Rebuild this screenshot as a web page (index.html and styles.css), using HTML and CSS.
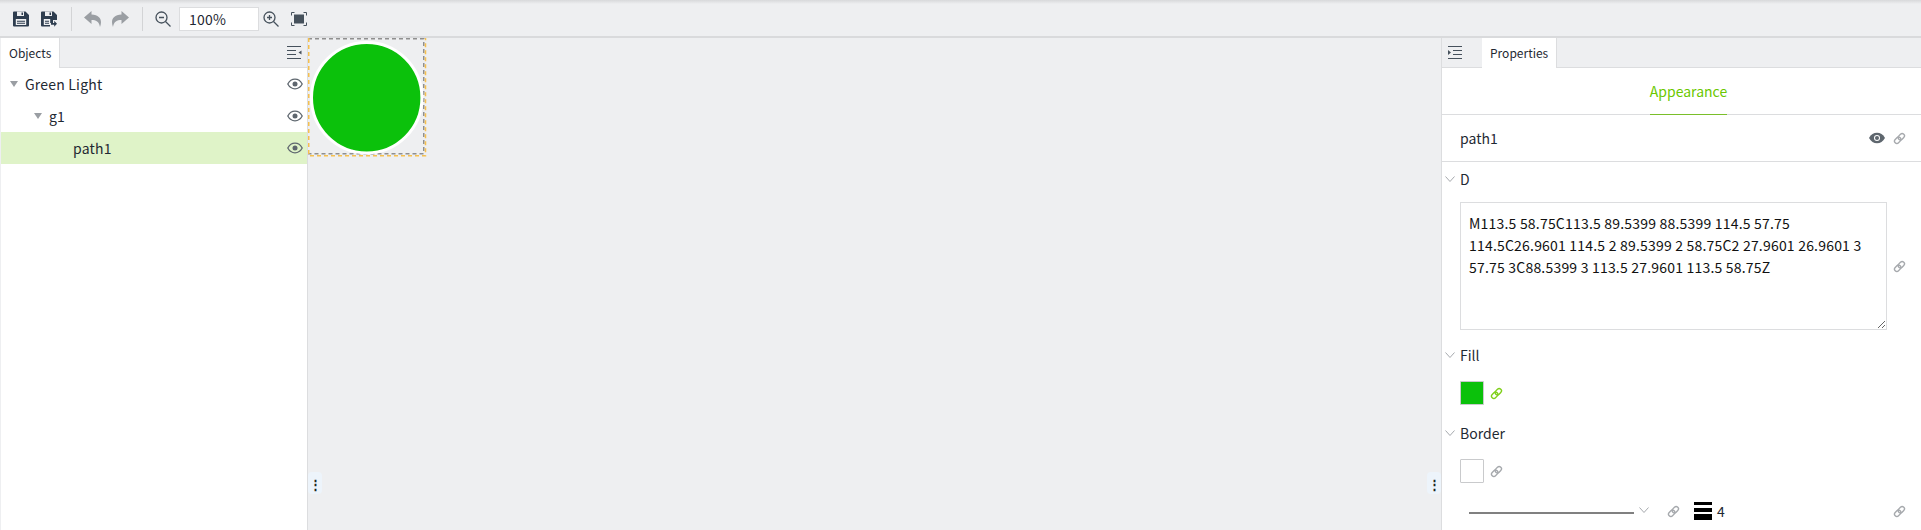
FILE: index.html
```html
<!DOCTYPE html>
<html lang="en">
<head>
  <meta charset="UTF-8">
  <title>Green Light</title>
  <link rel="stylesheet" href="styles.css">
</head>
<body>
  <svg class="defs" width="0" height="0">
    <symbol id="eye" viewBox="0 0 16 12">
      <path d="M.8 6C2.500 2.800 5 1.200 8 1.200S13.500 2.800 15.200 6C13.500 9.200 11 10.800 8 10.800S2.500 9.200.8 6Z" fill="none" stroke="currentColor" stroke-width="1.300"/>
      <circle cx="8" cy="6" r="2.500" fill="currentColor"/>
    </symbol>
    <symbol id="link" viewBox="0 0 14 14">
      <g fill="none" stroke="currentColor" stroke-width="1.500" transform="rotate(-45 7 7)">
        <rect x="0.500" y="4.500" width="7.500" height="5" rx="2.500"/>
        <rect x="6" y="4.500" width="7.500" height="5" rx="2.500"/>
      </g>
    </symbol>
    <symbol id="chev" viewBox="0 0 10 6">
      <path d="M.5.500 5 5.500 9.500.500" fill="none" stroke="currentColor" stroke-width="1"/>
    </symbol>
  </svg>

  <div class="toolbar">
    <button class="tool tool-save">
      <svg width="16" height="16" viewBox="0 0 16 16"><path d="M0 1.500A1 1 0 0 1 1 .5h11.500L16 4v10.500a1 1 0 0 1-1 1H1a1 1 0 0 1-1-1Z" fill="#2e3d4f"/><path d="M4 .5h7v4.500H4Z" fill="#eeeff1"/><path d="M8.500 1.500h1.500v2.500H8.500Z" fill="#2e3d4f"/><path d="M2.800 8h10.400v6H2.800Z" fill="#eeeff1"/><path d="M4 9.800h8v1H4Zm0 2h8v1H4Z" fill="#2e3d4f"/></svg>
    </button>
    <button class="tool tool-saveas">
      <svg width="16" height="16" viewBox="0 0 16 16"><path d="M0 1.500A1 1 0 0 1 1 .5h11.500L16 4v5h-4v3H9v3.500H1a1 1 0 0 1-1-1Z" fill="#2e3d4f"/><path d="M4 .5h7v4.500H4Z" fill="#eeeff1"/><path d="M8.500 1.500h1.500v2.500H8.500Z" fill="#2e3d4f"/><path d="M2.800 8h6.400v6H2.800Z" fill="#eeeff1"/><path d="M4 9.800h4v1H4Zm0 2h4v1H4Z" fill="#2e3d4f"/><path d="M10 12h3.200V9.800l2.800 3-2.800 3V13.800H10Z" fill="#2e3d4f"/></svg>
    </button>
    <span class="divider divider-a"></span>
    <button class="tool tool-undo">
      <svg width="18" height="16" viewBox="0 0 18 16"><path d="M7.500 0 0 6.500l7.500 6.500V9c4.500 0 7.500 1.500 8.500 7 2.500-6.500.5-12-8.500-12.500Z" fill="#9a9ea3"/></svg>
    </button>
    <button class="tool tool-redo">
      <svg width="18" height="16" viewBox="0 0 18 16"><path d="M10.500 0 18 6.500 10.500 13V9C6 9 3 10.500 2 16-.5 9.500 1.500 4 10.500 3.500Z" fill="#9a9ea3"/></svg>
    </button>
    <span class="divider divider-b"></span>
    <button class="tool tool-zoomout">
      <svg width="16" height="16" viewBox="0 0 16 16"><g fill="none" stroke="#46515c" stroke-width="1.300"><circle cx="6.500" cy="6.500" r="5.500"/><path d="M10.500 10.500 15.500 15.500M4 6.500h5"/></g></svg>
    </button>
    <input class="zoom-input" type="text" value="100%">
    <button class="tool tool-zoomin">
      <svg width="16" height="16" viewBox="0 0 16 16"><g fill="none" stroke="#46515c" stroke-width="1.300"><circle cx="6.500" cy="6.500" r="5.500"/><path d="M10.500 10.500 15.500 15.500M4 6.500h5M6.500 4v5"/></g></svg>
    </button>
    <button class="tool tool-fit">
      <svg width="16" height="14" viewBox="0 0 16 14"><path d="M3 2.500h10v9H3Z" fill="#46515c"/><path d="M.5 3.500V.5h3M12.500.5h3v3M15.500 10.500v3h-3M3.500 13.500h-3v-3" fill="none" stroke="#46515c"/></svg>
    </button>
  </div>

  <div class="workspace">
    <aside class="objects">
      <div class="tabbar">
        <div class="tab">Objects</div>
        <svg class="tab-icon" width="15" height="13" viewBox="0 0 15 13"><path d="M0 .5h14M0 4.500h9M0 8.500h9M0 12.500h14" stroke="#46515c" fill="none"/><path d="M14.500 4.500v4L11.500 6.500Z" fill="#46515c"/></svg>
      </div>
      <ul class="tree">
        <li class="node">
          <span class="caret"></span>Green Light
          <svg class="eye" width="16" height="12"><use href="#eye"/></svg>
        </li>
        <li class="node depth-1">
          <span class="caret"></span>g1
          <svg class="eye" width="16" height="12"><use href="#eye"/></svg>
        </li>
        <li class="node depth-2 selected">
          path1
          <svg class="eye" width="16" height="12"><use href="#eye"/></svg>
        </li>
      </ul>
    </aside>

    <main class="canvas">
      <svg class="artboard" width="119" height="119" viewBox="0 0 119 119">
        <path d="M0 .75H115.750V115.750H0" fill="none" stroke="#8f8f8f" stroke-width="1.500" stroke-dasharray="4 3"/>
        <path d="M.75 0V117.750H117.500V0" fill="none" stroke="#f5c04f" stroke-width="1.500" stroke-dasharray="4 3"/>
        <circle cx="58.700" cy="59.700" r="55.200" fill="#0bc10b" stroke="#fff" stroke-width="3"/>
      </svg>
      <div class="grip grip-left">⋮</div>
      <div class="grip grip-right">⋮</div>
    </main>

    <aside class="props">
      <div class="tabbar tabbar-props">
        <svg class="tab-icon" width="14" height="13" viewBox="0 0 14 13"><path d="M0 .5h14M5 4.500h9M5 8.500h9M0 12.500h14" stroke="#46515c" fill="none"/><path d="M0 4v5l3-2.500Z" fill="#46515c"/></svg>
        <div class="tab">Properties</div>
      </div>
      <div class="subtabs"><span class="subtab">Appearance</span></div>
      <div class="name-row">
        <span>path1</span>
        <span class="name-icons">
          <svg class="eye-solid" width="16" height="12" viewBox="0 0 16 12"><path d="M0 6C2 2.400 4.700.8 8 .8s6 1.600 8 5.200c-2 3.600-4.700 5.200-8 5.200S2 9.600 0 6Z" fill="#5e666e"/><circle cx="8" cy="6" r="3" fill="#fff"/><circle cx="8" cy="6" r="2" fill="#5e666e"/></svg>
          <svg class="link" width="13" height="13"><use href="#link"/></svg>
        </span>
      </div>

      <div class="section">
        <div class="section-head"><svg class="chev" width="10" height="6"><use href="#chev"/></svg>D</div>
        <div class="d-row">
          <textarea class="d-input">M113.5 58.75C113.5 89.5399 88.5399 114.5 57.75 114.5C26.9601 114.5 2 89.5399 2 58.75C2 27.9601 26.9601 3 57.75 3C88.5399 3 113.5 27.9601 113.5 58.75Z</textarea>
          <svg class="link" width="13" height="13"><use href="#link"/></svg>
        </div>
      </div>

      <div class="section">
        <div class="section-head"><svg class="chev" width="10" height="6"><use href="#chev"/></svg>Fill</div>
        <div class="swatch-row">
          <span class="swatch swatch-green"></span>
          <svg class="link link-on" width="13" height="13"><use href="#link"/></svg>
        </div>
      </div>

      <div class="section">
        <div class="section-head"><svg class="chev" width="10" height="6"><use href="#chev"/></svg>Border</div>
        <div class="swatch-row">
          <span class="swatch"></span>
          <svg class="link" width="13" height="13"><use href="#link"/></svg>
        </div>
        <div class="stroke-row">
          <span class="stroke-line"></span>
          <svg class="chev chev-stroke" width="10" height="6"><use href="#chev"/></svg>
          <svg class="link" width="13" height="13"><use href="#link"/></svg>
          <span class="weight"><i class="w1"></i><i class="w2"></i><i class="w3"></i></span>
          <span class="weight-num">4</span>
          <svg class="link link-end" width="13" height="13"><use href="#link"/></svg>
        </div>
      </div>
    </aside>
  </div>
</body>
</html>
```

FILE: styles.css
```css
* { margin: 0; padding: 0; box-sizing: border-box; }
html, body { height: 530px; overflow: hidden; }
body {
  background-color: #eeeff1;
  color: #1f2933;
  font-family: "Noto Sans CJK KR", "Noto Sans", sans-serif;
  font-size: 14px;
}
.defs { position: absolute; }
ul { list-style: none; }
button { border: none; background: none; display: flex; }

.toolbar {
  height: 38px;
  display: flex;
  align-items: center;
  padding-top: 2px;
  background: linear-gradient(#d8d9db, #eeeff1 4px);
  border-bottom: 2px solid #d9dadc;
}
.tool-save { margin-left: 13px; }
.tool-saveas { margin-left: 12px; }
.divider { width: 1px; height: 24px; background-color: #d3d4d6; }
.divider-a { margin: 0 12px 0 14px; }
.divider-b { margin: 0 12px 0 13px; }
.tool-redo { margin-left: 9px; }
.zoom-input {
  width: 80px; height: 24px;
  margin: 0 4px 0 8px;
  padding-left: 9px;
  border: 1px solid #dcdddf;
  background-color: #fff;
  color: #1f2933;
  font-family: inherit;
  font-size: 14px;
  letter-spacing: 0.2px;
}
.tool-fit { margin-left: 12px; }

.workspace { display: flex; height: 492px; }
.objects {
  width: 307px;
  margin-left: 1px;
  background-color: #fff;
  border-right: 1px solid #dcdddf;
}
.tabbar {
  height: 30px;
  display: flex;
  align-items: center;
  background-color: #eeeff1;
  border-bottom: 1px solid #dcdddf;
}
.tab {
  height: 30px;
  padding: 0 8px;
  display: flex;
  align-items: center;
  font-size: 12px;
  background-color: #fff;
  border-right: 1px solid #dcdddf;
}
.objects .tab-icon { margin-left: auto; margin-right: 5px; }

.node {
  height: 32px;
  padding-left: 9px;
  display: flex;
  align-items: center;
  letter-spacing: 0.2px;
}
.depth-1 { padding-left: 33px; }
.depth-2 { padding-left: 72px; }
.selected { background-color: #dff3c8; }
.caret {
  width: 0; height: 0;
  margin-right: 7px;
  border-left: 4px solid transparent;
  border-right: 4px solid transparent;
  border-top: 6px solid #9a9ea3;
}
.eye { margin-left: auto; margin-right: 4px; color: #5e666e; }

.canvas { flex: 1; position: relative; }
.artboard { position: absolute; left: 0; top: 0; }
.grip {
  position: absolute;
  top: 434px;
  width: 14px; height: 22px;
  display: flex;
  align-items: center;
  justify-content: center;
  background-color: #edf4fb;
  border-radius: 4px;
  color: #222;
  font-size: 13px;
  font-weight: bold;
}
.grip-left { left: 0; }
.grip-right { right: 0; }

.props {
  width: 480px;
  background-color: #fff;
  border-left: 1px solid #dcdddf;
}
.tabbar-props .tab-icon { margin: 0 20px 0 6px; }
.subtabs {
  height: 47px;
  padding-left: 14px;
  display: flex;
  justify-content: center;
  border-bottom: 1px solid #dcdddf;
}
.subtab {
  height: 47px;
  padding-top: 13px;
  color: #6bc800;
  border-bottom: 1px solid #7abf2a;
}
.name-row {
  height: 47px;
  padding: 0 15px 0 18px;
  display: flex;
  align-items: center;
  justify-content: space-between;
  border-bottom: 1px solid #dcdddf;
}
.name-icons { display: flex; align-items: center; gap: 8px; }
.link { color: #a6a9ad; flex: none; }
.link-on { color: #7fd01a; }
.section-head {
  height: 34px;
  display: flex;
  align-items: center;
  padding-left: 3px;
}
.chev { color: #a6a9ad; margin-right: 5px; }
.d-row {
  display: flex;
  align-items: center;
  gap: 6px;
  padding-left: 18px;
  margin: 6px 0 8px;
}
.d-input {
  width: 427px; height: 128px;
  padding: 9px 8px;
  border: 1px solid #dcdddf;
  color: #111;
  font-family: inherit;
  font-size: 14px;
  letter-spacing: 0.2px;
  line-height: 22px;
  outline: none;
}
.swatch-row {
  display: flex;
  align-items: center;
  gap: 6px;
  padding-left: 18px;
  margin: 9px 0 11px;
}
.swatch {
  width: 24px; height: 24px;
  border: 1px solid #c9cacc;
  border-radius: 1px;
  background-color: #fff;
}
.swatch-green { background-color: #0bc10b; }
.stroke-row {
  display: flex;
  align-items: center;
  padding-left: 27px;
  margin-top: 18px;
}
.stroke-line {
  width: 165px; height: 2px;
  margin-top: 4px;
  background-color: #808080;
}
.chev-stroke { margin: 0 0 2px 5px; }
.stroke-row .link { margin-left: 18px; }
.weight {
  width: 18px; height: 18px;
  margin-left: 14px;
  display: flex;
  flex-direction: column;
  justify-content: space-between;
}
.weight i { display: block; background-color: #000; }
.w1 { height: 3px; }
.w2 { height: 4px; }
.w3 { height: 6px; }
.weight-num { margin-left: 5px; }
.stroke-row .link-end { margin-left: auto; margin-right: 15px; }
```
